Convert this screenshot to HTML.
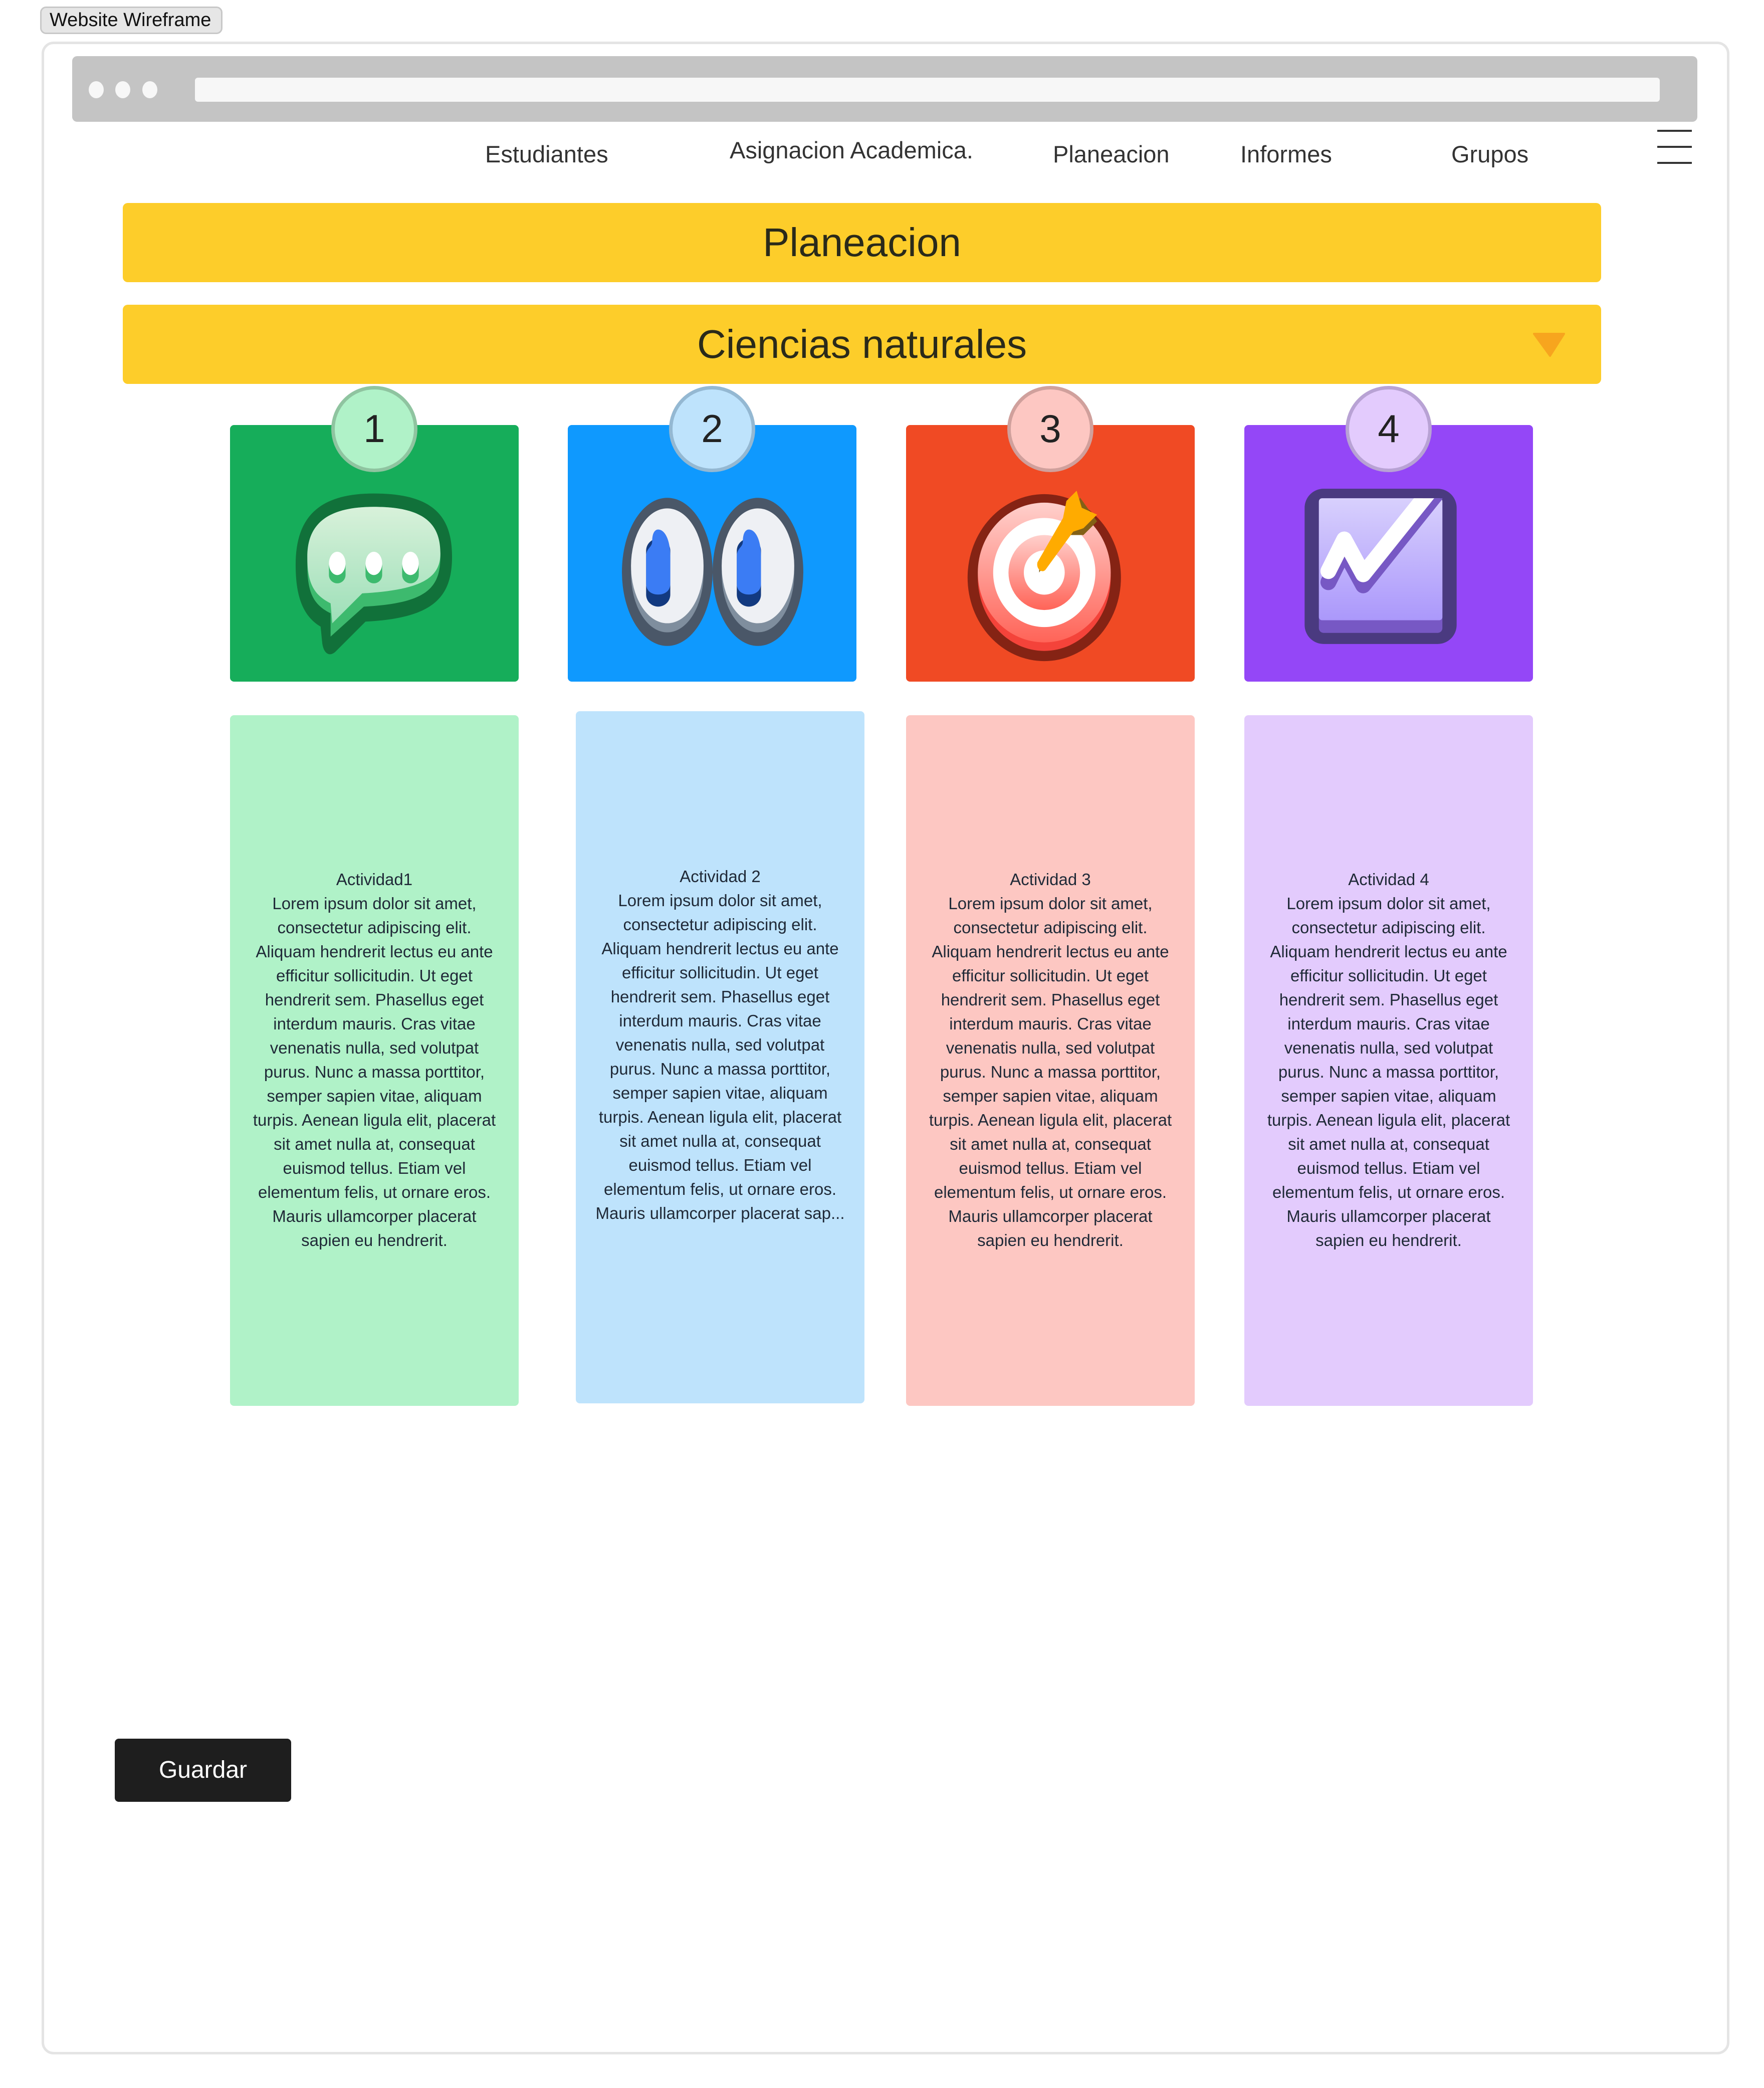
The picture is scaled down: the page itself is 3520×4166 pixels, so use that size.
<!DOCTYPE html>
<html><head><meta charset="utf-8">
<style>
*{margin:0;padding:0;box-sizing:border-box}
body{width:3520px;height:4166px;background:#fff;position:relative;overflow:hidden;font-family:"Liberation Sans",Arial,sans-serif;color:#222}
.a{position:absolute}
.lbl{left:80px;top:13px;width:364px;height:55px;background:#e6e6e6;border:3px solid #c8c8c8;border-radius:12px;font-size:38px;line-height:49px;padding-left:16px;color:#111}
.frame{left:83px;top:83px;width:3368px;height:4016px;border:5px solid #e4e4e4;border-radius:24px}
.bar{left:144px;top:112px;width:3243px;height:131px;background:#c4c4c4;border-radius:10px}
.dot{width:30px;height:34px;border-radius:50%;background:#f7f7f7;top:162px}
.url{left:389px;top:155px;width:2923px;height:48px;background:#f7f7f7;border-radius:6px}
.nav{font-size:47px;color:#333;white-space:nowrap}
.hb{left:3307px;width:69px;height:4px;background:#333}
.yb{left:245px;width:2950px;height:158px;background:#fdcd2a;border-radius:10px;text-align:center;font-size:80px;line-height:158px;color:#2a2a1a}
.cc{top:848px;width:576px;height:512px;border-radius:8px}
.num{top:770px;width:172px;height:172px;border-radius:50%;border:7px solid;text-align:center;font-size:78px;line-height:156px;color:#222}
.tc{width:576px;border-radius:8px;text-align:center;font-size:33px;line-height:48px;color:#1f2937;white-space:nowrap}
.btn{left:229px;top:3469px;width:352px;height:126px;background:#1e1e1e;border-radius:8px;color:#fff;font-size:48px;line-height:126px;text-align:center}
</style></head><body>
<div class="a lbl">Website Wireframe</div>
<div class="a frame"></div>
<div class="a bar"></div>
<div class="a dot" style="left:177px"></div>
<div class="a dot" style="left:230px"></div>
<div class="a dot" style="left:284px"></div>
<div class="a url"></div>

<div class="a nav" style="left:968px;top:280px">Estudiantes</div>
<div class="a nav" style="left:1456px;top:272px">Asignacion Academica.</div>
<div class="a nav" style="left:2101px;top:280px">Planeacion</div>
<div class="a nav" style="left:2475px;top:280px">Informes</div>
<div class="a nav" style="left:2896px;top:280px">Grupos</div>
<div class="a hb" style="top:259px"></div>
<div class="a hb" style="top:291px"></div>
<div class="a hb" style="top:323px"></div>

<div class="a yb" style="top:405px">Planeacion</div>
<div class="a yb" style="top:608px">Ciencias naturales</div>
<svg class="a" style="left:3059px;top:664px" width="64" height="48" viewBox="0 0 64 48"><path d="M2 2 H62 L34 46 Z" fill="#f7a51e" stroke="#f7a51e" stroke-width="4" stroke-linejoin="round"/></svg>

<div class="a cc" style="left:459px;background:#16ad5a"></div>
<div class="a cc" style="left:1133px;background:#0f99fe"></div>
<div class="a cc" style="left:1808px;background:#f04a24"></div>
<div class="a cc" style="left:2483px;background:#9447f7"></div>

<!-- chat icon -->
<svg class="a" style="left:578px;top:978px" width="336" height="332" viewBox="0 0 100 100">
<defs><linearGradient id="g1" x1="0" y1="0" x2="0" y2="1"><stop offset="0" stop-color="#d8f1da"/><stop offset="1" stop-color="#9ddfb8"/></linearGradient></defs>
<path d="M50 2 C15 2 3 18 3 45 C3 65 8 76 18 82 L19 92 C20 99 24 100 27 97 L45 79 C85 77 97 65 97 40 C97 15 85 2 50 2 Z" fill="#11713a"/>
<path d="M50 10 C20 10 10 22 10 45 C10 62 14 69 24 74 L24 88 L44 70 C80 68 90 60 90 40 C90 20 80 10 50 10 Z" fill="#3dba6e"/>
<path d="M50 10 C20 10 10 22 10 40 C10 56 14 63 24 68 L25 80 L43 62 C80 60 90 52 90 38 C90 20 80 10 50 10 Z" fill="url(#g1)"/>
<g fill="#3dba6e"><rect x="23" y="40" width="10" height="16" rx="5"/><rect x="45" y="40" width="10" height="16" rx="5"/><rect x="67" y="40" width="10" height="16" rx="5"/></g>
<g fill="#fff"><ellipse cx="28" cy="44" rx="5" ry="7"/><ellipse cx="50" cy="44" rx="5" ry="7"/><ellipse cx="72" cy="44" rx="5" ry="7"/></g>
</svg>

<!-- eyes icon -->
<svg class="a" style="left:1235px;top:990px" width="374" height="302" viewBox="0 0 124 100">
<ellipse cx="32" cy="50" rx="30" ry="49" fill="#4a5768"/>
<ellipse cx="92" cy="50" rx="30" ry="49" fill="#4a5768"/>
<ellipse cx="32" cy="51" rx="24" ry="39" fill="#7f8e9e"/>
<ellipse cx="92" cy="51" rx="24" ry="39" fill="#7f8e9e"/>
<ellipse cx="32" cy="46" rx="24" ry="38" fill="#eef0f4"/>
<ellipse cx="92" cy="46" rx="24" ry="38" fill="#eef0f4"/>
<rect x="18" y="28" width="16" height="45" rx="8" fill="#133a80"/>
<rect x="78" y="28" width="16" height="45" rx="8" fill="#133a80"/>
<path d="M18 40 C18 34 22 34 22 30 C22 24 24 22 26 22 C30 22 34 28 34 40 L34 58 C34 62 31 65 26 65 C21 65 18 62 18 58 Z" fill="#3b7cf4"/>
<path d="M78 40 C78 34 82 34 82 30 C82 24 84 22 86 22 C90 22 94 28 94 40 L94 58 C94 62 91 65 86 65 C81 65 78 62 78 58 Z" fill="#3b7cf4"/>
</svg>

<!-- target icon -->
<svg class="a" style="left:1924px;top:965px" width="340" height="358" viewBox="0 0 100 105">
<defs><linearGradient id="g3" x1="0" y1="0" x2="0" y2="1"><stop offset="0" stop-color="#ffd0cc"/><stop offset="1" stop-color="#ff6458"/></linearGradient></defs>
<ellipse cx="47" cy="55" rx="45" ry="49" fill="#852314"/>
<ellipse cx="47" cy="55" rx="39" ry="43" fill="#f4433a"/>
<ellipse cx="47" cy="52" rx="39" ry="41" fill="url(#g3)"/>
<ellipse cx="47" cy="52" rx="30" ry="32" fill="#fff"/>
<ellipse cx="47" cy="52" rx="21" ry="22" fill="url(#g3)"/>
<ellipse cx="47" cy="52" rx="12" ry="13" fill="#fff"/>
<path d="M44 52 L60 30 L70 30 L78 22 L73 15 L68 8 L64 18 L60 28 L44 45 Z" fill="#836016"/>
<path d="M43 46 L58 20 L60 10 L66 4 L69 14 L78 18 L70 26 L64 28 L48 50 C46 53 42 50 43 46 Z" fill="#ffab00"/>
</svg>

<!-- chart icon -->
<svg class="a" style="left:2597px;top:958px" width="316" height="344" viewBox="0 0 100 100">
<defs><linearGradient id="g4" x1="0" y1="0" x2="0" y2="1"><stop offset="0" stop-color="#d8d0fd"/><stop offset="1" stop-color="#ab98fb"/></linearGradient>
<clipPath id="cp"><rect x="11" y="7" width="78" height="77"/></clipPath></defs>
<rect x="2" y="1" width="96" height="98" rx="12" fill="#4a3a80"/>
<rect x="11" y="7" width="78" height="85" rx="3" fill="#7758c4"/>
<rect x="11" y="7" width="78" height="77" rx="2" fill="url(#g4)"/>
<g clip-path="url(#cp)">
<path d="M17 60 L27 40 L39 62 L95 -8" stroke="#7758c4" stroke-width="10" fill="none" stroke-linejoin="round" stroke-linecap="round"/>
<path d="M17 53 L27 33 L39 55 L95 -15" stroke="#fff" stroke-width="10" fill="none" stroke-linejoin="round" stroke-linecap="round"/>
</g>
</svg>

<div class="a num" style="left:661px;background:#b0f2c8;border-color:#8fc4a0">1</div>
<div class="a num" style="left:1335px;background:#bee3fc;border-color:#94b8d2">2</div>
<div class="a num" style="left:2010px;background:#fdc7c2;border-color:#d0a09c">3</div>
<div class="a num" style="left:2685px;background:#e3cbfd;border-color:#b8a2d4">4</div>

<div class="a tc" style="left:459px;top:1427px;height:1378px;background:#b0f2c8;padding-top:304px">Actividad1<br>Lorem ipsum dolor sit amet,<br>consectetur adipiscing elit.<br>Aliquam hendrerit lectus eu ante<br>efficitur sollicitudin. Ut eget<br>hendrerit sem. Phasellus eget<br>interdum mauris. Cras vitae<br>venenatis nulla, sed volutpat<br>purus. Nunc a massa porttitor,<br>semper sapien vitae, aliquam<br>turpis. Aenean ligula elit, placerat<br>sit amet nulla at, consequat<br>euismod tellus. Etiam vel<br>elementum felis, ut ornare eros.<br>Mauris ullamcorper placerat<br>sapien eu hendrerit.</div>
<div class="a tc" style="left:1149px;top:1419px;height:1381px;background:#bee3fc;padding-top:306px">Actividad 2<br>Lorem ipsum dolor sit amet,<br>consectetur adipiscing elit.<br>Aliquam hendrerit lectus eu ante<br>efficitur sollicitudin. Ut eget<br>hendrerit sem. Phasellus eget<br>interdum mauris. Cras vitae<br>venenatis nulla, sed volutpat<br>purus. Nunc a massa porttitor,<br>semper sapien vitae, aliquam<br>turpis. Aenean ligula elit, placerat<br>sit amet nulla at, consequat<br>euismod tellus. Etiam vel<br>elementum felis, ut ornare eros.<br>Mauris ullamcorper placerat sap...</div>
<div class="a tc" style="left:1808px;top:1427px;height:1378px;background:#fdc7c2;padding-top:304px">Actividad 3<br>Lorem ipsum dolor sit amet,<br>consectetur adipiscing elit.<br>Aliquam hendrerit lectus eu ante<br>efficitur sollicitudin. Ut eget<br>hendrerit sem. Phasellus eget<br>interdum mauris. Cras vitae<br>venenatis nulla, sed volutpat<br>purus. Nunc a massa porttitor,<br>semper sapien vitae, aliquam<br>turpis. Aenean ligula elit, placerat<br>sit amet nulla at, consequat<br>euismod tellus. Etiam vel<br>elementum felis, ut ornare eros.<br>Mauris ullamcorper placerat<br>sapien eu hendrerit.</div>
<div class="a tc" style="left:2483px;top:1427px;height:1378px;background:#e3cbfd;padding-top:304px">Actividad 4<br>Lorem ipsum dolor sit amet,<br>consectetur adipiscing elit.<br>Aliquam hendrerit lectus eu ante<br>efficitur sollicitudin. Ut eget<br>hendrerit sem. Phasellus eget<br>interdum mauris. Cras vitae<br>venenatis nulla, sed volutpat<br>purus. Nunc a massa porttitor,<br>semper sapien vitae, aliquam<br>turpis. Aenean ligula elit, placerat<br>sit amet nulla at, consequat<br>euismod tellus. Etiam vel<br>elementum felis, ut ornare eros.<br>Mauris ullamcorper placerat<br>sapien eu hendrerit.</div>

<div class="a btn">Guardar</div>
</body></html>
